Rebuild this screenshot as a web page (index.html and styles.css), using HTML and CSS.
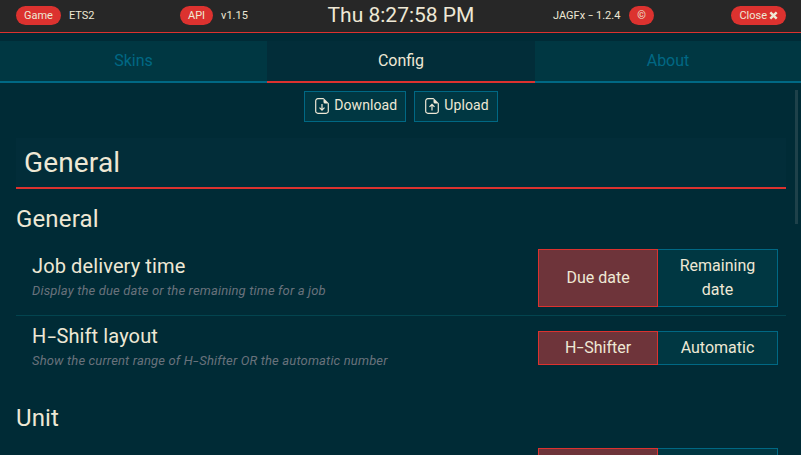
FILE: index.html
```html
<!DOCTYPE html>
<html lang="en">
<head>
<meta charset="utf-8">
<title>Config</title>
<link rel="stylesheet" href="styles.css">
</head>
<body>
<header class="topbar">
  <div class="info game"><span class="pill">Game</span><span>ETS2</span></div>
  <div class="info api"><span class="pill">API</span><span>v1.15</span></div>
  <div class="clock">Thu 8:27:58 PM</div>
  <div class="info version"><span>JAGFx <span class="hyphen">-</span> 1.2.4</span><span class="pill">©</span></div>
  <div class="info close"><span class="pill">Close<svg class="cross" viewBox="0 0 9 9"><path d="M1.3 1.3 7.7 7.7M7.7 1.3 1.3 7.7"/></svg></span></div>
</header>
<nav class="tabs">
  <a class="tab">Skins</a>
  <a class="tab active">Config</a>
  <a class="tab">About</a>
</nav>
<main class="content">
  <div class="actions">
    <button class="btn"><svg class="file" viewBox="0 0 14 16"><path class="line" d="M8.7.7H3A2.2 2.2 0 0 0 .7 3v10A2.2 2.2 0 0 0 3 15.300h8a2.200 2.200 0 0 0 2.300-2.300V5.300"/><path class="fold" d="M8.500 0 14 5.500H10A1.500 1.500 0 0 1 8.500 4Z"/><path class="line" d="M7 6v6M4.500 9.700 7 12.200 9.500 9.700"/></svg><span>Download</span></button>
    <button class="btn"><svg class="file" viewBox="0 0 14 16"><path class="line" d="M8.7.7H3A2.2 2.2 0 0 0 .7 3v10A2.2 2.2 0 0 0 3 15.300h8a2.200 2.200 0 0 0 2.300-2.300V5.300"/><path class="fold" d="M8.500 0 14 5.500H10A1.500 1.500 0 0 1 8.500 4Z"/><path class="line" d="M7 12.500v-6M4.500 8.800 7 6.300 9.500 8.800"/></svg><span>Upload</span></button>
  </div>
  <h1 class="section">General</h1>
  <h2 class="group">General</h2>
  <div class="row">
    <div class="label"><h3>Job delivery time</h3><p>Display the due date or the remaining time for a job</p></div>
    <div class="choice"><span class="option on">Due date</span><span class="option">Remaining date</span></div>
  </div>
  <div class="row last">
    <div class="label"><h3>H<span class="hyphen">-</span>Shift layout</h3><p>Show the current range of H<span class="hyphen">-</span>Shifter OR the automatic number</p></div>
    <div class="choice"><span class="option on"><span>H<span class="hyphen">-</span>Shifter</span></span><span class="option">Automatic</span></div>
  </div>
  <h2 class="group unit">Unit</h2>
  <div class="row">
    <div class="label"></div>
    <div class="choice"><span class="option on"></span><span class="option"></span></div>
  </div>
</main>
<div class="scrollbar"></div>
</body>
</html>
```
FILE: styles.css
```css
* { box-sizing: border-box; }
html, body { height: 100%; overflow: hidden; }
body {
  display: flex;
  flex-direction: column;
  margin: 0;
  background: #002b36;
  color: #eee8d5;
  font: 16px/24px Roboto, sans-serif;
}
h1, h2, h3, p { margin: 0; font-weight: 400; }
.hyphen { display: inline-block; margin: 0 .11em; transform: scaleX(1.55); }
.topbar {
  display: grid;
  flex: none;
  grid-template-columns: 164px 115px 1fr 140px 93px;
  align-items: center;
  height: 33px;
  padding: 0 15px 2px 16px;
  background: #272727;
  border-bottom: 1px solid #dc322f;
}
.info { display: flex; align-items: center; gap: 8px; font-size: 11px; line-height: 19px; white-space: nowrap; }
.version { gap: 9px; }
.close { justify-content: flex-end; }
.pill { display: flex; align-items: center; height: 19px; padding: 0 8px; border-radius: 10px; background: #dc322f; }
.cross { width: 9px; height: 9px; margin-left: 2px; fill: none; stroke: #eee8d5; stroke-width: 2.4; }
.clock { padding-right: 46px; font-size: 21px; text-align: center; white-space: nowrap; }
.tabs { display: grid; flex: none; grid-template-columns: 267px 268px 266px; height: 42px; margin-top: 8px; }
.tab { padding-top: 8px; text-align: center; color: #006884; background: #003742; border-bottom: 2px solid #006884; }
.tab.active { color: #eee8d5; background: #022d39; border-color: #dc322f; }
.content { flex: 1; min-height: 0; overflow: hidden; padding: 8px 15px 0 16px; }
.actions { display: flex; justify-content: center; gap: 8px; }
.btn {
  display: flex; align-items: center; gap: 5px;
  height: 31px; padding: 0 8px 2px 10px;
  border: 1px solid #006884; background: #003742; color: #eee8d5;
  font: 14px/21px Roboto, sans-serif; letter-spacing: .1px;
}
.file { width: 14px; height: 16px; margin-top: 1px; }
.line { fill: none; stroke: #eee8d5; stroke-width: 1.2; }
.fold { fill: #eee8d5; }
.section { height: 51px; margin-top: 16px; padding: 7px 8px 0; font-size: 28px; line-height: 36px; letter-spacing: .15px; background: #022d39; border-bottom: 2px solid #dc322f; }
.group { margin-top: 16px; font-size: 24px; line-height: 28px; letter-spacing: .15px; }
.row { display: flex; justify-content: space-between; align-items: center; margin-top: 8px; padding: 8px 8px 8px 16px; border-bottom: 1px solid #03444f; }
.row.last { margin-top: 0; border: 0; height: 64px; }
h3 { font-size: 20px; line-height: 24px; letter-spacing: .12px; }
.label p { margin-top: 2px; font-size: 13px; line-height: 22px; letter-spacing: .15px; font-style: italic; color: #69727c; }
.choice { display: grid; grid-template-columns: 120px 120px; }
.option { display: flex; align-items: center; justify-content: center; min-height: 34px; padding: 4px 16px; text-align: center; border: 1px solid #006884; background: #003742; }
.option + .option { border-left: 0; }
.option.on { background: #6e343a; border-color: #dc322f; }
.unit { margin-top: 24px; }
.scrollbar { position: absolute; right: 3px; top: 90px; width: 3px; height: 134px; background: #1e414a; }
```
